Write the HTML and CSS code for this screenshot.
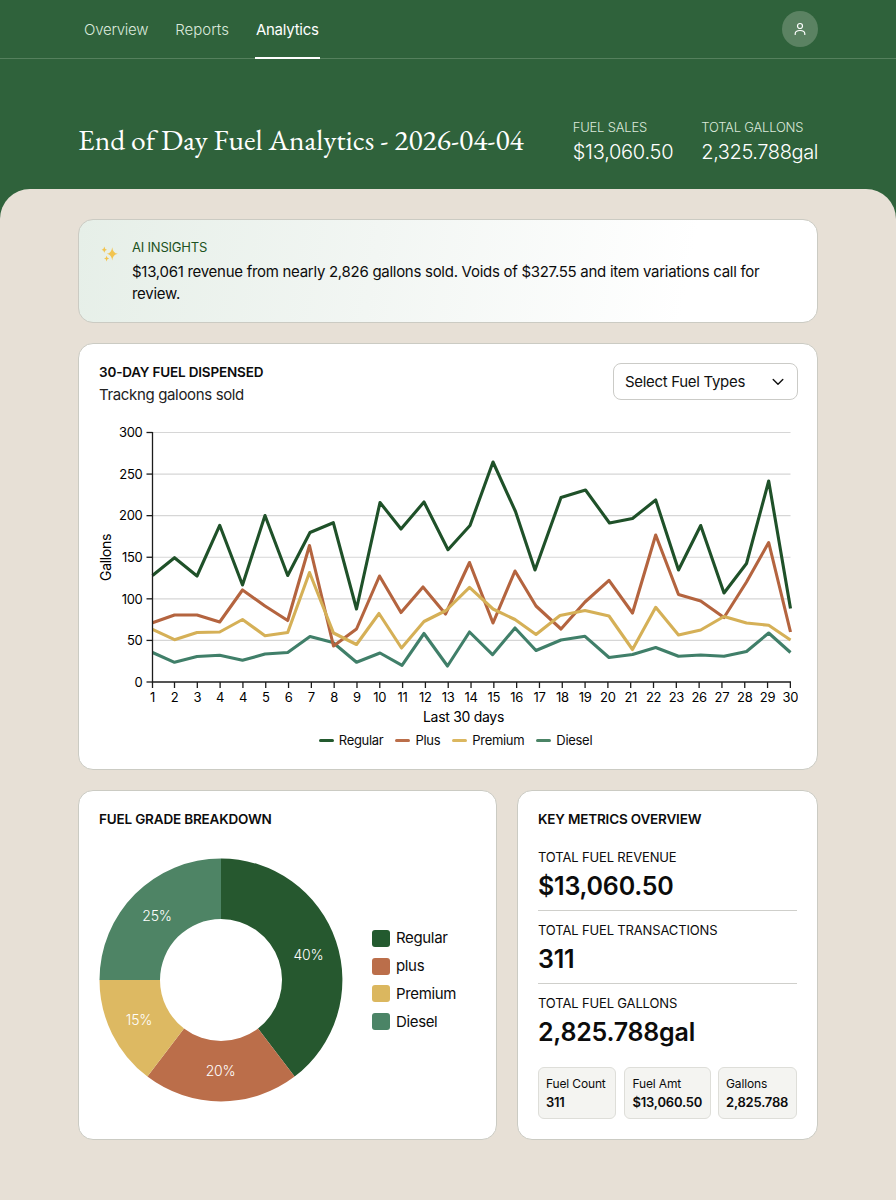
FILE: index.html
```html
<!DOCTYPE html>
<html lang="en">
<head>
  <meta charset="UTF-8" />
  <meta name="viewport" content="width=device-width, initial-scale=1.0"/>
  <title>End of Day Fuel Analytics</title>
  <link rel="stylesheet" href="styles.css">
</head>
<body>

  <header class="header">
    <nav class="navbar">
      <div class="nav-links">
        <a class="nav-link nav-overview">Overview</a>
        <a class="nav-link">Reports</a>
        <a class="nav-link active">Analytics</a>
      </div>
      <div class="avatar">
        <svg width="14" height="14" viewBox="0 0 14 14" fill="none" stroke="#fff" stroke-width="1.2" stroke-linecap="round">
          <circle cx="7" cy="4" r="2.5"/>
          <path d="M2.2 12.4V11.8C2.2 9.7 4.1 8.5 7 8.5S11.8 9.7 11.8 11.8V12.4"/>
        </svg>
      </div>
    </nav>

    <div class="hero">
      <h1>End of Day Fuel Analytics - 2026-04-04</h1>
      <div class="hero-stats">
        <div class="hero-stat">
          <div class="hero-label">FUEL SALES</div>
          <div class="hero-value">$13,060.50</div>
        </div>
        <div class="hero-stat">
          <div class="hero-label">TOTAL GALLONS</div>
          <div class="hero-value hero-gallons">2,325.788gal</div>
        </div>
      </div>
    </div>
  </header>

  <main class="content">
    <section class="card insights">
      <svg class="sparkle" width="18" height="18" viewBox="0 0 18 18" fill="#f2c44f">
        <path d="M11.2 2.2Q11.8 8 16.8 8.8Q11.8 9.6 11.2 15.4Q10.6 9.6 5.8 8.8Q10.6 8 11.2 2.2Z"/>
        <path d="M3.3 1.6Q3.6 4.4 6 4.7Q3.6 5 3.3 7.8Q3 5 .6 4.7Q3 4.4 3.3 1.6Z"/>
        <path d="M5.6 10.8Q5.9 13.3 8.2 13.6Q5.9 13.9 5.6 16.4Q5.3 13.9 3 13.6Q5.3 13.3 5.6 10.8Z"/>
      </svg>
      <div>
        <div class="insights-title">AI INSIGHTS</div>
        <p class="insights-text">$13,061 revenue from nearly 2,826 gallons sold. Voids of $327.55 and item variations call for review.</p>
      </div>
    </section>

    <section class="card dispensed">
      <div class="card-head">
        <div>
          <h2>30-DAY FUEL DISPENSED</h2>
          <p class="subtitle">Trackng galoons sold</p>
        </div>
        <button class="select" type="button">
          Select Fuel Types
          <svg width="12" height="8" viewBox="0 0 12 8" fill="none" stroke="#111" stroke-width="1.4" stroke-linecap="round" stroke-linejoin="round">
            <path d="M1.2 1.4L6 6.2L10.8 1.4"/>
          </svg>
        </button>
      </div>
      <svg id="line-chart" class="line-chart" width="700" height="304" viewBox="98 424 700 304"></svg>
      <div class="legend">
        <span class="legend-item"><i class="dash regular"></i>Regular</span>
        <span class="legend-item"><i class="dash plus"></i>Plus</span>
        <span class="legend-item"><i class="dash premium"></i>Premium</span>
        <span class="legend-item"><i class="dash diesel"></i>Diesel</span>
      </div>
    </section>

    <div class="bottom-row">
      <section class="card breakdown">
        <h2 class="breakdown-title">FUEL GRADE BREAKDOWN</h2>
        <div class="breakdown-body">
          <svg class="donut" width="244" height="244" viewBox="-122 -122 244 244">
            <path fill="#26582f" d="M0-121.5A121.5 121.5 0 0 1 73.6 96.6L37 48.5A61 61 0 0 0 0-61Z"/>
            <path fill="#bb6e4a" d="M73.6 96.6A121.5 121.5 0 0 1-73.6 96.6L-37 48.5A61 61 0 0 0 37 48.5Z"/>
            <path fill="#ddb962" d="M-73.6 96.6A121.5 121.5 0 0 1-121.5 0L-61 0A61 61 0 0 0-37 48.5Z"/>
            <path fill="#4e8465" d="M-121.5 0A121.5 121.5 0 0 1 0-121.5L0-61A61 61 0 0 0-61 0Z"/>
            <text x="87.5" y="-20.5">40%</text>
            <text x="-.5" y="95.5">20%</text>
            <text x="-82" y="44.5">15%</text>
            <text x="-64" y="-59.5">25%</text>
          </svg>
          <ul class="grades">
            <li><i class="swatch regular"></i>Regular</li>
            <li><i class="swatch plus"></i>plus</li>
            <li><i class="swatch premium"></i>Premium</li>
            <li><i class="swatch diesel"></i>Diesel</li>
          </ul>
        </div>
      </section>

      <section class="card metrics">
        <h2 class="metrics-title">KEY METRICS OVERVIEW</h2>
        <div class="metric">
          <div class="metric-label">TOTAL FUEL REVENUE</div>
          <div class="metric-value">$13,060.50</div>
        </div>
        <div class="metric">
          <div class="metric-label">TOTAL FUEL TRANSACTIONS</div>
          <div class="metric-value">311</div>
        </div>
        <div class="metric">
          <div class="metric-label">TOTAL FUEL GALLONS</div>
          <div class="metric-value">2,825.788gal</div>
        </div>
        <div class="chips">
          <div class="chip"><span>Fuel Count</span><b>311</b></div>
          <div class="chip"><span>Fuel Amt</span><b>$13,060.50</b></div>
          <div class="chip"><span>Gallons</span><b>2,825.788</b></div>
        </div>
      </section>
    </div>
  </main>

  <script>
    const chart = document.getElementById('line-chart');
    const LEFT = 152.5, RIGHT = 790.5, TOP = 432.5, BOTTOM = 682;

    const days = [1, 2, 3, 4, 4, 5, 6, 7, 8, 9, 10, 11, 12, 13, 14, 15, 16, 17, 18, 19, 20, 21, 22, 23, 26, 27, 28, 29, 30];

    const series = {
      regular: '152.5,575.5 174.5,557.7 197,576 219.7,525.3 242.5,585 265,515.5 287.7,575.5 310,532.5 333.3,522.7 356.5,609 380,502.5 401,529 424,502 448,549.7 470,525.5 493,462 515.5,511.5 535,570 561,497.5 585.5,490 609.5,523 632.5,518.5 655.7,500 678.5,570 700.7,525.5 724,593 746.5,563.5 768.7,481 790.5,608.5',
      plus: '152.5,622.7 174.5,615 197,615 219.7,622 242.5,590 265,606 287.7,620.5 309.5,545.5 333.5,646 356.5,629 379.5,576 401,612.5 423,587 445.5,614 469.5,562.5 493,623 515,571 536,606 561,629 585,602 609,580.3 632.5,613 655.7,535 678.5,594.5 700.7,601 724,617.5 746.5,582 768.7,542.5 790.5,632',
      premium: '152.5,629.3 174.5,639.7 197,632.5 219.7,632 242.5,619.5 265,635.7 287.7,632.5 309.5,572.5 333.5,633 356.5,644.5 379,613.5 401.5,648 424,621.5 446,610.5 469.5,587.3 493,609 515,619.5 536,634.5 560,615.5 585,610.5 609,616 632.5,649.5 655.7,607.3 678.5,635 700.7,630 724,616.5 746.5,623 768.7,625.3 790.5,640',
      diesel: '152.5,652.5 174.5,662.3 197,656.5 219.7,655.3 242.5,660.3 265,654 287.7,652.5 310,636.5 333,642.5 356.5,662.3 380,653 402,665.3 424,633.5 447.5,666 469.5,632 492.5,654.7 515,628 536,650.5 561,640 585,636.3 609,657.5 632.5,654.5 655.7,647.5 678.5,656.3 700.7,655 724,656.3 746.5,651.5 768.7,633 790.5,652.5'
    };

    let svg = '';

    // gridlines and y labels
    for (let v = 0; v <= 300; v += 50) {
      const y = BOTTOM - (BOTTOM - TOP) * v / 300;
      if (v > 0) svg += `<line class="grid" x1="${LEFT}" y1="${y}" x2="${RIGHT}" y2="${y}"/>`;
      svg += `<line class="axis" x1="146.5" y1="${y}" x2="${LEFT}" y2="${y}"/>`;
      svg += `<text class="tick y" x="142.5" y="${y + 4.7}">${v}</text>`;
    }

    // x ticks, the first one sits on the y axis
    days.forEach((day, i) => {
      const x = i === 0 ? LEFT : 174.5 + (i - 1) * 22.81;
      svg += `<line class="axis" x1="${x}" y1="${BOTTOM}" x2="${x}" y2="${BOTTOM + 6}"/>`;
      svg += `<text class="tick x" x="${x}" y="702">${day}</text>`;
    });

    for (const name of ['diesel', 'regular', 'plus', 'premium']) {
      svg += `<polyline class="line line-${name}" points="${series[name]}"/>`;
    }

    svg += `<path class="axis" d="M${LEFT} ${TOP - .5}V${BOTTOM}H${RIGHT + .5}"/>`;
    svg += '<text class="axis-title" x="463.5" y="721.5">Last 30 days</text>';
    svg += '<text class="axis-title" transform="translate(111 557.5) rotate(-90)">Gallons</text>';
    chart.innerHTML = svg;
  </script>
</body>
</html>
```
FILE: styles.css
```css
* {
  box-sizing: border-box;
}

body {
  margin: 0;
  min-height: 1200px;
  font-family: Inter, "Liberation Sans", sans-serif;
  font-size: 15px;
  letter-spacing: -0.3px;
  color: #0c0c0c;
  background: #2f623b;
}

h1, h2, p, ul {
  margin: 0;
  padding: 0;
}

/* header */
.header {
  height: 189px;
  color: #fff;
}

.navbar {
  display: flex;
  justify-content: space-between;
  height: 59px;
  padding: 0 78px 0 84px;
  border-bottom: 1px solid #55805d;
}

.nav-links {
  display: flex;
  gap: 26px;
}

.nav-link {
  height: 59px;
  line-height: 60px;
  font-weight: 300;
  letter-spacing: 0;
  color: #dbe9dc;
}

.nav-overview {
  padding-right: 1px;
  letter-spacing: -0.25px;
}

.nav-link.active {
  padding: 0 1px;
  font-weight: 400;
  letter-spacing: -0.25px;
  color: #fff;
  border-bottom: 2px solid #fff;
}

.avatar {
  display: flex;
  align-items: center;
  justify-content: center;
  width: 36px;
  height: 36px;
  margin-top: 11px;
  border-radius: 50%;
  background: #5b8262;
}

.hero {
  display: flex;
  justify-content: space-between;
  padding: 60px 78px 0;
}

h1 {
  padding-top: 3px;
  font-family: "EB Garamond", "Liberation Serif", serif;
  font-size: 29.5px;
  font-weight: 400;
  line-height: 36px;
  letter-spacing: 0;
  white-space: nowrap;
}

.hero-stats {
  display: flex;
  gap: 28px;
}

.hero-label {
  font-size: 13px;
  font-weight: 300;
  line-height: 17px;
  letter-spacing: -0.2px;
  color: #dbe9dc;
}

.hero-value {
  margin-top: 3px;
  font-size: 20px;
  font-weight: 300;
  line-height: 26px;
  letter-spacing: -0.26px;
}

.hero-gallons {
  letter-spacing: -0.4px;
}

/* content */
.content {
  display: flex;
  flex-direction: column;
  gap: 20px;
  min-height: 1011px;
  padding: 30px 78px 0;
  border-radius: 30px 30px 0 0;
  background: #e7e0d6;
}

.card {
  border: 1px solid #cbcbc3;
  border-radius: 15px;
  background: #fff;
}

h2 {
  font-size: 13.5px;
  font-weight: 600;
  line-height: 18px;
  letter-spacing: -0.18px;
}

.insights {
  display: flex;
  gap: 13px;
  height: 104px;
  padding: 18px 30px 0 22px;
  background: linear-gradient(100deg, #e6efe8 0%, #f2f6f3 40%, #fff 82%);
}

.sparkle {
  flex: none;
  margin-top: 7px;
}

.insights-title {
  font-size: 13px;
  line-height: 18px;
  letter-spacing: -0.2px;
  color: #1d5222;
}

.insights-text {
  margin-top: 5px;
  line-height: 22px;
  letter-spacing: -0.28px;
}

.dispensed {
  height: 427px;
  padding: 19px 19px 0 20px;
}

.card-head {
  display: flex;
  justify-content: space-between;
  height: 61px;
}

.subtitle {
  margin-top: 3px;
  line-height: 22px;
  letter-spacing: -0.35px;
  color: #222;
}

.select {
  display: flex;
  align-items: center;
  justify-content: space-between;
  width: 185px;
  height: 37px;
  padding: 0 13px 0 11px;
  border: 1px solid #cbcbc7;
  border-radius: 8px;
  background: #fff;
  color: #111;
  font: inherit;
  letter-spacing: -0.31px;
}

/* line chart */
.line-chart {
  display: block;
  margin-left: -1px;
}

.grid {
  stroke: #d6d6d6;
  stroke-width: 1.2;
}

.axis {
  fill: none;
  stroke: #1c1c1c;
  stroke-width: 1.3;
}

.tick {
  font-size: 13px;
}

.tick.y {
  text-anchor: end;
}

.tick.x {
  text-anchor: middle;
}

.axis-title {
  font-size: 14px;
  text-anchor: middle;
}

.line {
  fill: none;
  stroke-width: 3.1;
  stroke-linejoin: round;
}

.line-regular { stroke: #1f5129; }
.line-plus { stroke: #b4643f; }
.line-premium { stroke: #d5b057; }
.line-diesel { stroke: #407f69; }

.legend {
  display: flex;
  justify-content: center;
  gap: 12px;
  margin-top: 3px;
  padding-left: 14px;
}

.legend-item {
  display: flex;
  align-items: center;
  gap: 5px;
  font-size: 13px;
  line-height: 18px;
}

.dash {
  width: 15px;
  height: 3px;
  border-radius: 2px;
}

.regular { background: #235a2f; }
.plus { background: #bb6e4a; }
.premium { background: #dbb75f; }
.diesel { background: #4b8466; }

/* bottom cards */
.bottom-row {
  display: grid;
  grid-template-columns: 419px 301px;
  gap: 20px;
}

.breakdown,
.metrics {
  height: 350px;
  padding: 19px 20px 0;
}

.breakdown-body {
  display: flex;
  align-items: center;
  gap: 29px;
  margin-top: 30px;
}

.donut text {
  fill: #fff;
  font-size: 14px;
  font-weight: 300;
  letter-spacing: -0.2px;
  text-anchor: middle;
}

.grades {
  display: flex;
  flex-direction: column;
  gap: 5.7px;
  list-style: none;
}

.grades li {
  display: flex;
  align-items: center;
  gap: 6px;
  line-height: 22px;
  letter-spacing: -0.35px;
}

.swatch {
  width: 18px;
  height: 17px;
  border-radius: 3px;
}

.metrics-title {
  margin-bottom: 20px;
}

.metric {
  height: 63px;
  margin-bottom: 10px;
  border-bottom: 1px solid #cfcfcb;
}

.metric:nth-of-type(3) {
  border-bottom: 0;
}

.metric-label {
  font-size: 13px;
  line-height: 18px;
  letter-spacing: -0.15px;
}

.metric-value {
  margin-top: 4px;
  font-size: 25px;
  font-weight: 600;
  line-height: 32px;
  letter-spacing: -0.22px;
}

.chips {
  display: grid;
  grid-template-columns: 78px 87px 79px;
  justify-content: space-between;
}

.chip {
  height: 52px;
  padding: 6px 0 0 8px;
  border: 1px solid #deded9;
  border-radius: 6px;
  background: #f4f4f1;
}

.chip span,
.chip b {
  display: block;
  font-size: 12px;
  line-height: 19px;
  letter-spacing: -0.15px;
}

.chip b {
  font-size: 13px;
  font-weight: 600;
  letter-spacing: -0.2px;
}

.chip:nth-child(1),
.chip:nth-child(3) {
  padding-left: 7px;
}
```
